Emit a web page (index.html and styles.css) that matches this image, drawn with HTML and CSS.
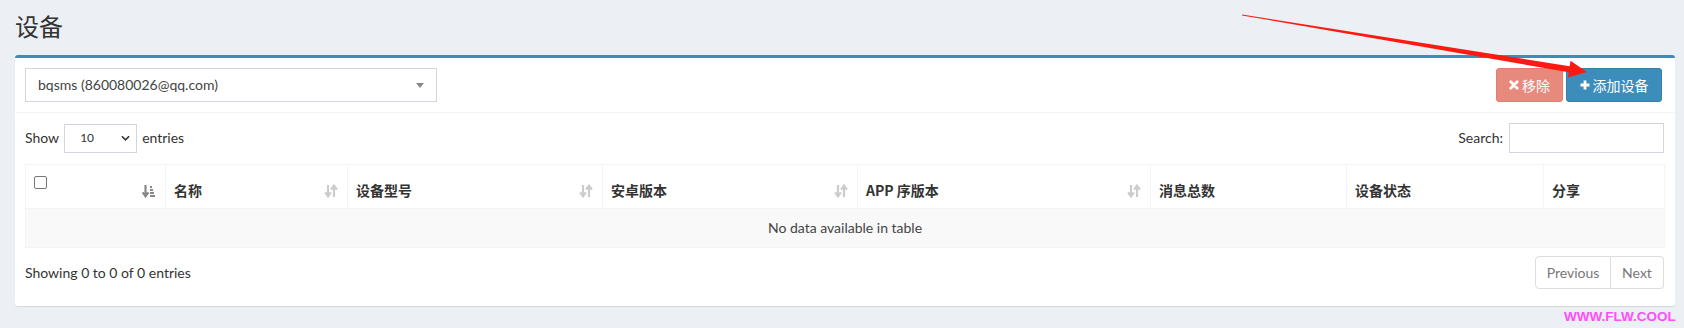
FILE: index.html
```html
<!DOCTYPE html>
<html lang="zh-CN">
<head>
    <meta charset="utf-8">
    <meta name="viewport" content="width=device-width, initial-scale=1">
    <link rel="stylesheet" href="styles.css">
</head>
<body>

<section class="content-header">
    <h1>设备</h1>
</section>

<section class="content">
    <div class="box">
        <!-- Device owner picker and actions -->
        <div class="box-header">
            <div class="select2">
                <span class="select2-text">bqsms (860080026@qq.com)</span>
                <span class="select2-arrow"></span>
            </div>
            <div class="box-tools">
                <button class="btn btn-danger" disabled>
                    <svg class="btn-icon" viewBox="0 0 10 10"><path d="M1.8 1.8 L8.2 8.2 M8.2 1.8 L1.8 8.2" stroke="#fff" stroke-width="2.8" stroke-linecap="round"/></svg>移除
                </button>
                <button class="btn btn-primary">
                    <svg class="btn-icon" viewBox="0 0 10 10"><path d="M5 0.5 V9.5 M0.5 5 H9.5" stroke="#fff" stroke-width="2.8"/></svg>添加设备
                </button>
            </div>
        </div>

        <div class="box-body">
            <div class="dt-top">
                <label class="dt-length">Show
                    <span class="len-select">10
                        <svg class="chev" viewBox="0 0 10 6"><path d="M1 1 L5 5 L9 1" fill="none" stroke="#333" stroke-width="1.8"/></svg>
                    </span>
                    entries</label>
                <label class="dt-search">Search: <input type="search"></label>
            </div>

            <table class="dt-table">
                <colgroup>
                    <col style="width:140px"><col style="width:182px"><col style="width:255px"><col style="width:255px">
                    <col style="width:293px"><col style="width:196px"><col style="width:197px"><col style="width:121px">
                </colgroup>
                <thead>
                    <tr>
                        <th class="sort-asc"><span class="cb"></span>
                            <svg class="sort-icon" viewBox="0 0 14 14"><path d="M3.5 1 V11 M0.6 8.3 L3.5 12.3 L6.4 8.3" fill="none" stroke="#888" stroke-width="2.2"/><path d="M8 3 H10 M8 6 H11 M8 9 H12 M8 12 H13" stroke="#888" stroke-width="1.8"/></svg>
                        </th>
                        <th class="sorting">名称
                            <svg class="sort-icon" viewBox="0 0 14 14"><path d="M4 1 V11 M1.1 8.3 L4 12.3 L6.9 8.3" fill="none" stroke="#ccc" stroke-width="2.2"/><path d="M10 13 V3 M7.1 5.7 L10 1.7 L12.9 5.7" fill="none" stroke="#ccc" stroke-width="2.2"/></svg>
                        </th>
                        <th class="sorting">设备型号
                            <svg class="sort-icon" viewBox="0 0 14 14"><path d="M4 1 V11 M1.1 8.3 L4 12.3 L6.9 8.3" fill="none" stroke="#ccc" stroke-width="2.2"/><path d="M10 13 V3 M7.1 5.7 L10 1.7 L12.9 5.7" fill="none" stroke="#ccc" stroke-width="2.2"/></svg>
                        </th>
                        <th class="sorting">安卓版本
                            <svg class="sort-icon" viewBox="0 0 14 14"><path d="M4 1 V11 M1.1 8.3 L4 12.3 L6.9 8.3" fill="none" stroke="#ccc" stroke-width="2.2"/><path d="M10 13 V3 M7.1 5.7 L10 1.7 L12.9 5.7" fill="none" stroke="#ccc" stroke-width="2.2"/></svg>
                        </th>
                        <th class="sorting">APP 序版本
                            <svg class="sort-icon" viewBox="0 0 14 14"><path d="M4 1 V11 M1.1 8.3 L4 12.3 L6.9 8.3" fill="none" stroke="#ccc" stroke-width="2.2"/><path d="M10 13 V3 M7.1 5.7 L10 1.7 L12.9 5.7" fill="none" stroke="#ccc" stroke-width="2.2"/></svg>
                        </th>
                        <th>消息总数</th>
                        <th>设备状态</th>
                        <th>分享</th>
                    </tr>
                </thead>
                <tbody>
                    <tr class="odd">
                        <td colspan="8" class="dt-empty">No data available in table</td>
                    </tr>
                </tbody>
            </table>

            <div class="dt-bottom">
                <div class="dt-info">Showing 0 to 0 of 0 entries</div>
                <ul class="pagination">
                    <li class="disabled prev"><a>Previous</a></li>
                    <li class="disabled next"><a>Next</a></li>
                </ul>
            </div>
        </div>
    </div>
</section>

<!-- Red annotation arrow drawn on top of the screenshot -->
<svg class="annot-arrow" width="1684" height="328" viewBox="0 0 1684 328">
    <polygon points="1242,14.6 1569.6,66.2 1570.5,60.8 1587,72 1567.9,77.6 1568.7,72.2 1242,15.4" fill="#fe1a12"/>
</svg>

<div class="watermark">WWW.FLW.COOL</div>

</body>
</html>
```

FILE: styles.css
```css
body {
    margin: 0;
    font-family: 'Lato', 'Noto Sans CJK SC', sans-serif;
    font-size: 14px;
    line-height: 1.42857;
    color: #333;
    background-color: #ecf0f5;
    position: relative;
    height: 328px;
    overflow: hidden;
}

/* Page title */
.content-header {
    padding: 11px 15px 0;
}

.content-header h1 {
    margin: 0;
    font-size: 24px;
    font-weight: 400;
    line-height: 30px;
    color: #333;
    font-family: 'Noto Sans CJK SC', sans-serif;
}

.content {
    padding: 14px 9px 0 15px;
}

/* Box */
.box {
    background: #fff;
    border-top: 3px solid #3c8dbc;
    border-radius: 3px;
    box-shadow: 0 1px 1px rgba(0, 0, 0, 0.1);
}

.box-header {
    display: flex;
    justify-content: space-between;
    align-items: center;
    padding: 10px 13px 10px 10px;
    border-bottom: 1px solid #f4f4f4;
}

/* Select2 lookalike */
.select2 {
    height: 32px;
    border: 1px solid #d2d6de;
    display: flex;
    align-items: center;
    justify-content: space-between;
    padding: 0 12px;
    box-sizing: content-box;
    width: 386px;
}

.select2-text {
    color: #444;
    font-size: 14px;
}

.select2-arrow {
    width: 0;
    height: 0;
    border-left: 4px solid transparent;
    border-right: 4px solid transparent;
    border-top: 5px solid #888;
}

.box-tools {
    display: flex;
    gap: 3px;
}

.btn {
    height: 34px;
    padding: 0 12px;
    font-size: 14px;
    font-family: 'Noto Sans CJK SC', sans-serif;
    color: #fff;
    border-radius: 3px;
    border: 1px solid transparent;
    display: flex;
    align-items: center;
    justify-content: center;
    gap: 3px;
    cursor: pointer;
}

.btn-icon {
    width: 10px;
    height: 10px;
}

.btn-danger {
    background-color: #dd4b39;
    border-color: #d73925;
    opacity: 0.65;
    width: 67px;
    cursor: not-allowed;
}

.btn-primary {
    background-color: #3c8dbc;
    border-color: #367fa9;
    width: 96px;
}

/* Body with the data table */
.box-body {
    padding: 10px 11px 15px 10px;
}

.dt-top {
    display: flex;
    justify-content: space-between;
    align-items: center;
    height: 30px;
    margin-bottom: 11px;
}

.dt-length,
.dt-search {
    display: flex;
    align-items: center;
    font-weight: 400;
}

.len-select {
    display: inline-flex;
    align-items: center;
    justify-content: space-between;
    width: 50px;
    height: 27px;
    margin: 0 5px;
    padding: 0 6px 0 15px;
    border: 1px solid #d2d6de;
    font-size: 12px;
    color: #333;
    box-sizing: content-box;
}

.chev {
    width: 9px;
    height: 6px;
}

.dt-search input {
    width: 153px;
    height: 28px;
    margin-left: 6px;
    border: 1px solid #d2d6de;
    padding: 0;
    box-sizing: content-box;
}

/* Table */
.dt-table {
    width: 100%;
    border-collapse: collapse;
    table-layout: fixed;
    border: 1px solid #f4f4f4;
}

.dt-table th {
    position: relative;
    height: 27px;
    padding: 8px;
    text-align: left;
    vertical-align: bottom;
    font-weight: 700;
    border: 1px solid #f4f4f4;
    font-family: 'Noto Sans CJK SC', sans-serif;
    font-size: 14px;
    line-height: 20px;
    color: #333;
}

.cb {
    position: absolute;
    left: 8px;
    top: 11px;
    width: 11px;
    height: 11px;
    border: 1px solid #777;
    border-radius: 2px;
    background: #fff;
}

.sort-icon {
    position: absolute;
    right: 9px;
    bottom: 10px;
    width: 14px;
    height: 14px;
}

.dt-table tbody tr.odd {
    background-color: #f9f9f9;
}

.dt-empty {
    height: 22px;
    padding: 8px;
    text-align: center;
    border: 1px solid #f4f4f4;
    color: #444;
}

/* Footer: info and pager */
.dt-bottom {
    display: flex;
    justify-content: space-between;
    align-items: center;
    margin-top: 6px;
}

.pagination {
    display: flex;
    list-style: none;
    margin: 2px 0;
    padding: 0;
}

.pagination li a {
    display: block;
    padding: 6px 0;
    line-height: 19px;
    text-align: center;
    border: 1px solid #ddd;
    color: #777;
    background: #fff;
}

.pagination li.prev a {
    width: 74px;
    border-radius: 4px 0 0 4px;
}

.pagination li.next a {
    width: 52px;
    border-left: none;
    border-radius: 0 4px 4px 0;
}

/* Annotation overlays */
.annot-arrow {
    position: absolute;
    left: 0;
    top: 0;
    pointer-events: none;
}

.watermark {
    position: absolute;
    left: 1564px;
    top: 309px;
    font-family: 'Liberation Sans', sans-serif;
    font-weight: 700;
    font-size: 13.5px;
    line-height: 16px;
    color: #ff4dff;
    white-space: nowrap;
}
```
